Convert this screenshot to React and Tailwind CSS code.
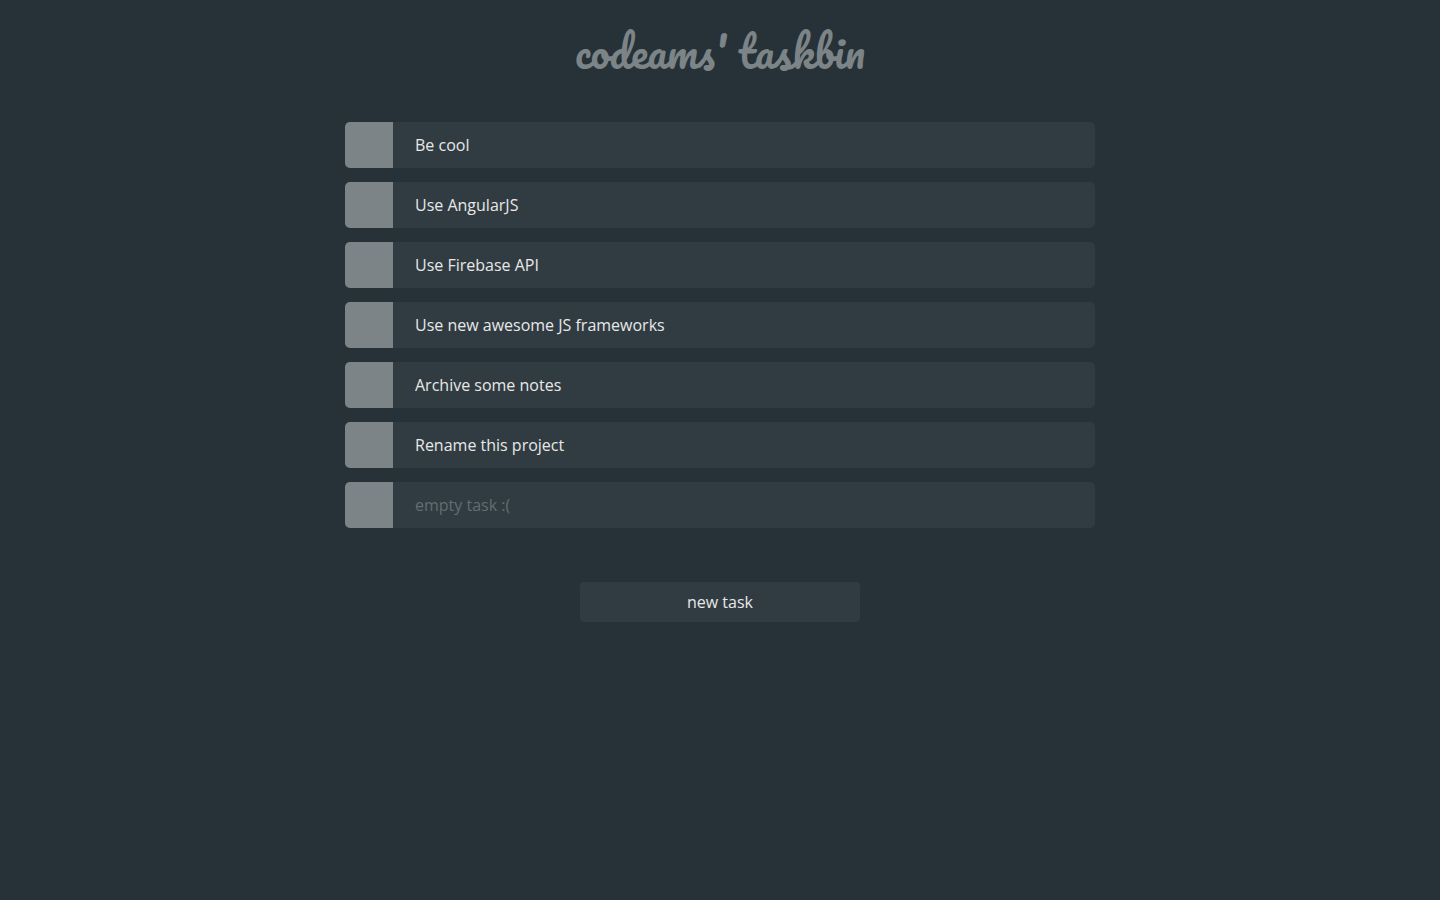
import { useState } from "react";

const initialTasks = [
  "Be cool",
  "Use AngularJS",
  "Use Firebase API",
  "Use new awesome JS frameworks",
  "Archive some notes",
  "Rename this project",
  "",
];

function Task({ text, onChange }) {
  return (
    <li className="flex h-[46px] overflow-hidden rounded-[5px] bg-[#313c42]">
      <input
        type="checkbox"
        aria-label="Archive task"
        className="w-12 shrink-0 cursor-pointer appearance-none bg-[#7c8487] checked:bg-[#313c42]"
      />
      <input
        type="text"
        aria-label="Task"
        value={text}
        placeholder="empty task :("
        onChange={(e) => onChange(e.target.value)}
        className="min-w-0 flex-1 bg-transparent px-[22px] text-base text-[#e8e8e8] outline-none placeholder:text-[#616d71]"
      />
    </li>
  );
}

export default function App() {
  const [tasks, setTasks] = useState(initialTasks);
  const update = (index, text) =>
    setTasks(tasks.map((task, i) => (i === index ? text : task)));

  return (
    <div className="flex min-h-screen flex-col items-center bg-[#263238] px-4 font-['Open_Sans',sans-serif]">
      <h1 className="mt-4 text-center font-['Pacifico',cursive] text-[42px] leading-[70px] font-normal text-[#7c8487]">
        codeams' taskbin
      </h1>
      <ul className="mt-9 flex w-full max-w-[750px] flex-col gap-[14px]">
        {tasks.map((text, i) => (
          <Task key={i} text={text} onChange={(value) => update(i, value)} />
        ))}
      </ul>
      <button
        type="button"
        onClick={() => setTasks([...tasks, ""])}
        className="mt-[54px] mb-10 h-10 w-[280px] cursor-pointer rounded bg-[#313c42] text-base text-[#e8e8e8]"
      >
        new task
      </button>
    </div>
  );
}
